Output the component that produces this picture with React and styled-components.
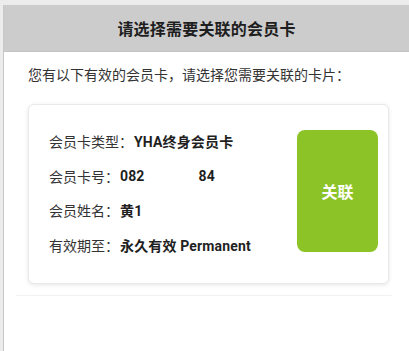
import React from "react";
import styled, { createGlobalStyle } from "styled-components";

const Global = createGlobalStyle`
  html, body { margin: 0; padding: 0; background: #f3f3f3; }
  body { font-family: "Roboto", "Noto Sans CJK SC", "Noto Sans", sans-serif; }
  * { box-sizing: border-box; }
`;

const Screen = styled.div`
  width: 409px;
  height: 351px;
  display: flex;
  padding-top: 5px;
  padding-left: 3px;
  background: #ececec;
  overflow: hidden;
`;

const Modal = styled.div`
  flex: 1;
  display: flex;
  flex-direction: column;
  background: #ffffff;
  border-left: 1px solid #c8c8c8;
`;

const Header = styled.div`
  height: 47px;
  flex: none;
  display: flex;
  align-items: center;
  justify-content: center;
  background: #cccccc;
  border-bottom: 1px solid #c4c4c4;
  font-size: 16px;
  font-weight: 700;
  color: #1e1e1e;
  letter-spacing: 0.2px;
`;

const Body = styled.div`
  padding: 13px 17px 0 12px;
  display: flex;
  flex-direction: column;
`;

const Intro = styled.p`
  margin: 0 0 0 12px;
  font-size: 14px;
  line-height: 20px;
  color: #333333;
`;

const CardList = styled.div`
  margin-top: 19px;
  padding: 0 3px 11px 12px;
  border-bottom: 1px solid #f2f2f2;
`;

const Card = styled.div`
  height: 180px;
  display: flex;
  align-items: center;
  justify-content: space-between;
  padding: 0 10px 0 20px;
  background: #ffffff;
  border: 1px solid #e9e9e9;
  border-radius: 6px;
  box-shadow: 0 1px 4px rgba(0, 0, 0, 0.1);
`;

const Info = styled.div`
  display: flex;
  flex-direction: column;
  margin-top: -2px;
`;

const Row = styled.div`
  height: 34.7px;
  display: flex;
  align-items: center;
  font-size: 14px;
  color: #333333;
  white-space: nowrap;
`;

const Label = styled.span`
  font-weight: 400;
  margin-right: 1px;
`;

const Value = styled.span`
  font-weight: 700;
  color: #1f1f1f;
  letter-spacing: 0.15px;
`;

const Masked = styled.span`
  display: inline-block;
  width: ${(p) => p.$w}px;
`;

const LinkButton = styled.button`
  width: 81px;
  height: 122px;
  margin-top: -6px;
  border: none;
  border-radius: 8px;
  background: #8cc428;
  color: #ffffff;
  font-family: inherit;
  font-size: 16px;
  font-weight: 700;
  cursor: pointer;
`;

export default function App() {
  return (
    <>
      <Global />
      <Screen>
        <Modal>
          <Header>请选择需要关联的会员卡</Header>
          <Body>
            <Intro>您有以下有效的会员卡，请选择您需要关联的卡片：</Intro>
            <CardList>
              <Card>
                <Info>
                  <Row>
                    <Label>会员卡类型：</Label>
                    <Value>YHA终身会员卡</Value>
                  </Row>
                  <Row>
                    <Label>会员卡号：</Label>
                    <Value>
                      082
                      <Masked $w={54} />
                      84
                    </Value>
                  </Row>
                  <Row>
                    <Label>会员姓名：</Label>
                    <Value>黄1</Value>
                  </Row>
                  <Row>
                    <Label>有效期至：</Label>
                    <Value>永久有效 Permanent</Value>
                  </Row>
                </Info>
                <LinkButton type="button">关联</LinkButton>
              </Card>
            </CardList>
          </Body>
        </Modal>
      </Screen>
    </>
  );
}
